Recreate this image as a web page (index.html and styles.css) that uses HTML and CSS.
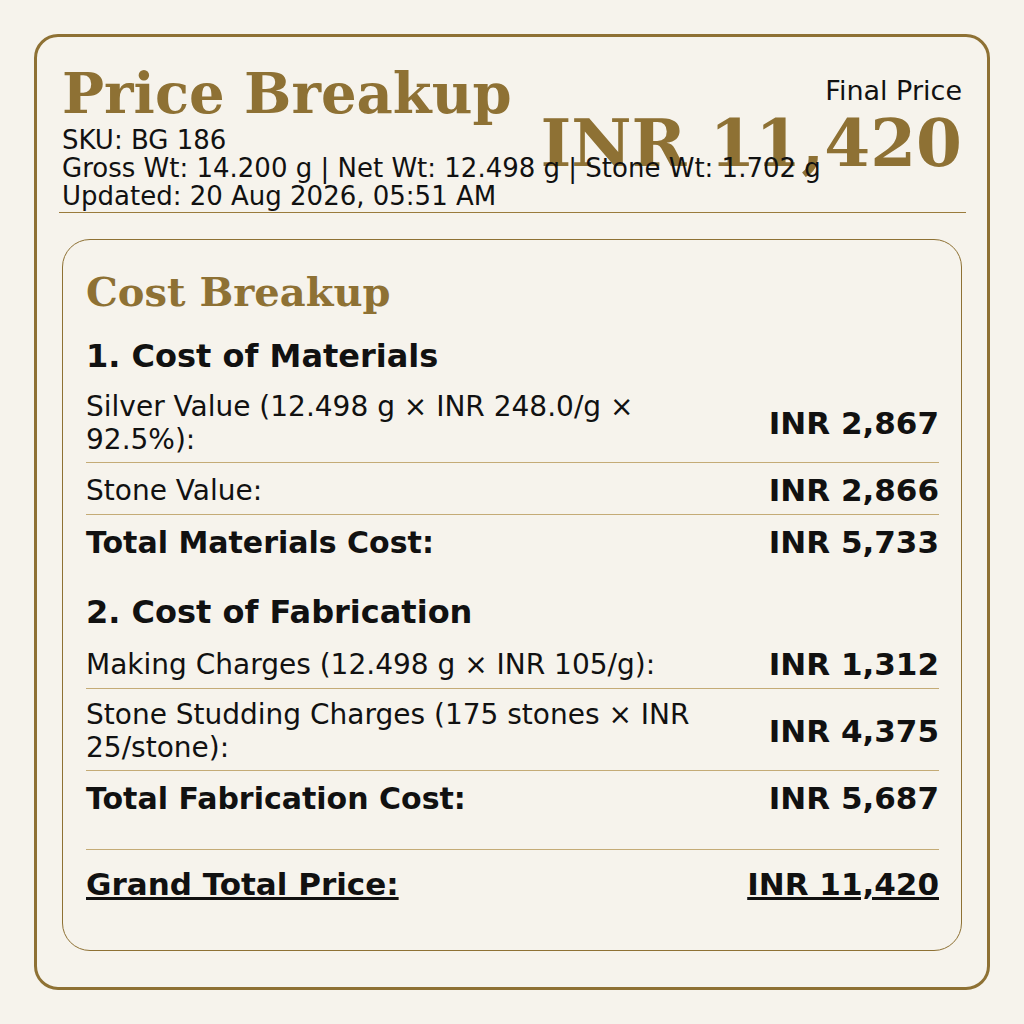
FILE: index.html
```html
<!DOCTYPE html>
<html lang="en">
<head>
<meta charset="utf-8">
<title>Price Breakup</title>
<link rel="stylesheet" href="styles.css">
</head>
<body>
<div class="card">
  <header class="head">
    <div class="meta">
      <h1 class="title">Price Breakup</h1>
      <div class="line">SKU: BG 186</div>
      <div class="line">Gross Wt: 14.200 g | Net Wt: 12.498 g | Stone Wt: 1.702 g</div>
      <div class="line">Updated: 20 Aug 2026, 05:51 AM</div>
    </div>
    <div class="final">
      <div class="final-label">Final Price</div>
      <div class="final-value">INR 11,420</div>
    </div>
  </header>
  <div class="rule"></div>
  <section class="inner">
    <h2 class="sub">Cost Breakup</h2>
    <h3 class="sec">1. Cost of Materials</h3>
    <div class="row sep"><span class="label">Silver Value (12.498 g × INR 248.0/g × 92.5%):</span><span class="val">INR 2,867</span></div>
    <div class="row sep"><span class="label">Stone Value:</span><span class="val">INR 2,866</span></div>
    <div class="row total"><span class="label">Total Materials Cost:</span><span class="val">INR 5,733</span></div>
    <h3 class="sec sec2">2. Cost of Fabrication</h3>
    <div class="row sep"><span class="label">Making Charges (12.498 g × INR 105/g):</span><span class="val">INR 1,312</span></div>
    <div class="row sep"><span class="label">Stone Studding Charges (175 stones × INR 25/stone):</span><span class="val">INR 4,375</span></div>
    <div class="row total"><span class="label">Total Fabrication Cost:</span><span class="val">INR 5,687</span></div>
    <div class="grand"><span class="label">Grand Total Price:</span><span class="val">INR 11,420</span></div>
  </section>
</div>
</body>
</html>
```
FILE: styles.css
```css
html, body {
  margin: 0;
  background: #f6f3ec;
}
body {
  padding: 34px;
  font-family: "DejaVu Sans", sans-serif;
  color: #111;
}
.card {
  border: 3px solid #8e7134;
  border-radius: 24px;
  padding: 24px 25px 0 25px;
  height: 956px;
  box-sizing: border-box;
}
.head {
  display: flex;
  justify-content: space-between;
  align-items: flex-start;
}
.meta {
  position: relative;
  min-width: 0;
  white-space: nowrap;
}
.title {
  margin: 0;
  font-family: "DejaVu Serif", serif;
  font-weight: bold;
  font-size: 56px;
  line-height: 65px;
  color: #8e7134;
}
.line {
  font-size: 26px;
  line-height: 28px;
}
.final {
  flex-shrink: 0;
  text-align: right;
  padding-top: 15px;
}
.final-label {
  font-size: 27px;
  line-height: 30px;
}
.final-value {
  margin-top: 4px;
  font-family: "DejaVu Serif", serif;
  font-weight: bold;
  font-size: 66px;
  line-height: 66px;
  color: #8e7134;
}
.rule {
  margin: 2px -4px 0 -3px;
  border-top: 1px solid #9a7b3c;
}
.inner {
  margin-top: 26px;
  border: 1.5px solid #8e7134;
  border-radius: 28px;
  padding: 28px 22px 47.5px 23px;
}
.sub {
  margin: 0;
  font-family: "DejaVu Serif", serif;
  font-weight: bold;
  font-size: 40px;
  line-height: normal;
  color: #8e7134;
}
.sec {
  margin: 22px 0 6px 0;
  font-size: 32px;
  font-weight: bold;
  line-height: normal;
}
.sec2 {
  margin-top: 27px;
}
.row {
  display: flex;
  justify-content: space-between;
  align-items: center;
  gap: 40px;
  padding: 9px 0 6px 0;
}
.row.sep {
  border-bottom: 1px solid #c4ab76;
}
.label {
  font-size: 28px;
  line-height: normal;
}
.val {
  flex-shrink: 0;
  font-size: 31px;
  font-weight: bold;
  line-height: normal;
}
.total .label {
  font-size: 30px;
  font-weight: bold;
}
.grand {
  display: flex;
  justify-content: space-between;
  align-items: center;
  margin-top: 27px;
  border-top: 1px solid #c4ab76;
  padding-top: 16px;
}
.grand .label,
.grand .val {
  font-size: 31px;
  font-weight: bold;
  line-height: normal;
  text-decoration: underline;
}
```
